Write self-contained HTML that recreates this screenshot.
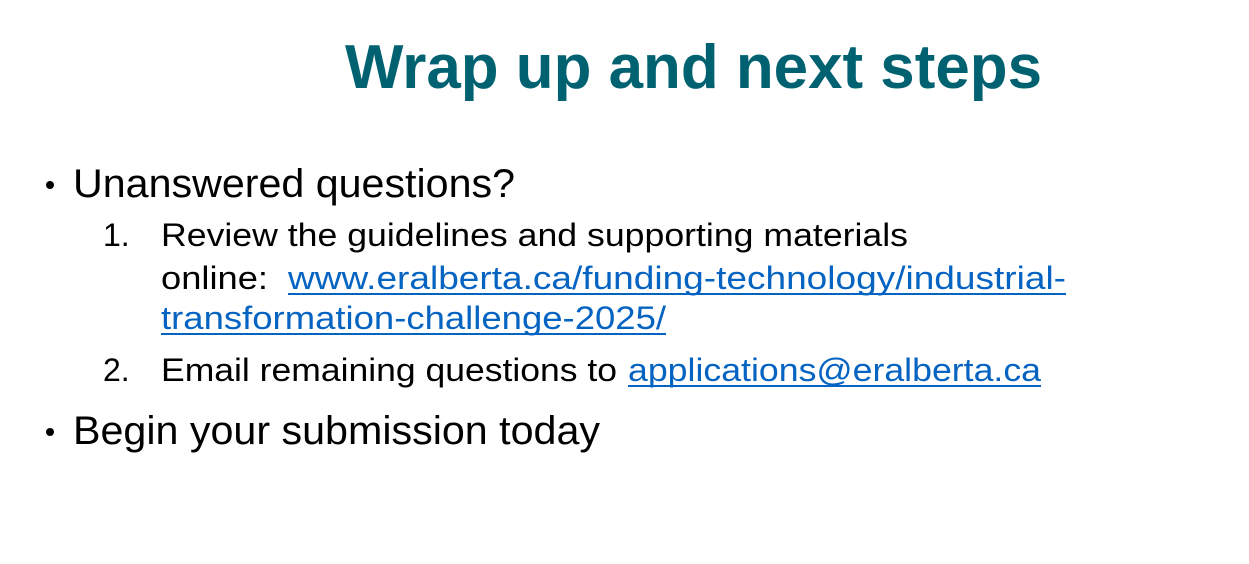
<!DOCTYPE html>
<html><head><meta charset="utf-8"><style>html,body{margin:0;padding:0;background:#fff;}svg{display:block}</style></head>
<body>
<svg width="1249" height="564" xmlns="http://www.w3.org/2000/svg" font-family="Liberation Sans, sans-serif">
<rect width="1249" height="564" fill="#fff"/>
<text x="345" y="88" font-size="62" font-weight="bold" fill="#006270" textLength="697" lengthAdjust="spacingAndGlyphs">Wrap up and next steps</text>
<g fill="#000">
<circle cx="50" cy="185" r="4"/>
<text x="73" y="197" font-size="40" textLength="442" lengthAdjust="spacingAndGlyphs">Unanswered questions?</text>
<text x="103" y="246" font-size="32">1.</text>
<text x="161" y="246" font-size="32" textLength="747" lengthAdjust="spacingAndGlyphs">Review the guidelines and supporting materials</text>
<text x="161" y="289" font-size="32" textLength="107" lengthAdjust="spacingAndGlyphs">online:</text>
<text x="103" y="381" font-size="32">2.</text>
<text x="161" y="381" font-size="32" textLength="456" lengthAdjust="spacingAndGlyphs">Email remaining questions to</text>
<circle cx="50" cy="432" r="4"/>
<text x="73" y="444" font-size="40" textLength="527" lengthAdjust="spacingAndGlyphs">Begin your submission today</text>
</g>
<g fill="#0563C1">
<text x="288" y="289" font-size="32" textLength="778" lengthAdjust="spacingAndGlyphs">www.eralberta.ca/funding-technology/industrial-</text>
<text x="161" y="329" font-size="32" textLength="505" lengthAdjust="spacingAndGlyphs">transformation-challenge-2025/</text>
<text x="628" y="381" font-size="32" textLength="413" lengthAdjust="spacingAndGlyphs">applications@eralberta.ca</text>
<rect x="288" y="293" width="778" height="2"/>
<rect x="161" y="333" width="505" height="2"/>
<rect x="628" y="385" width="413" height="2"/>
</g>
</svg>
</body></html>
